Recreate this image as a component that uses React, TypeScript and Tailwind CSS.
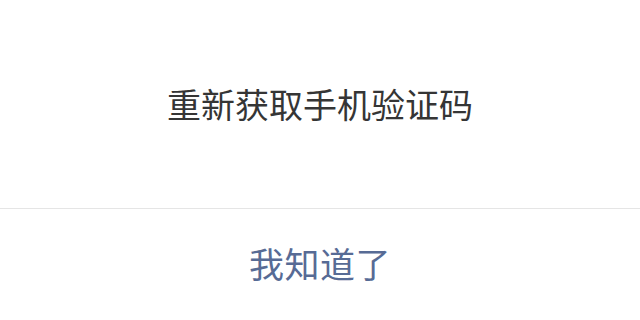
export default function App() {
  return (
    <div
      className="w-[640px] h-[320px] bg-white flex flex-col"
      style={{ fontFamily: '"Noto Sans CJK SC", "Noto Sans", sans-serif' }}
    >
      <div className="h-[208px] flex items-center justify-center">
        <p className="text-[34px] leading-none text-[#353535]">重新获取手机验证码</p>
      </div>
      <div className="h-px bg-[#e5e5e5]" />
      <button className="flex-1 flex items-center justify-center pb-1 text-[35px] tracking-[0.5px] leading-none text-[#576b95]">
        我知道了
      </button>
    </div>
  );
}
